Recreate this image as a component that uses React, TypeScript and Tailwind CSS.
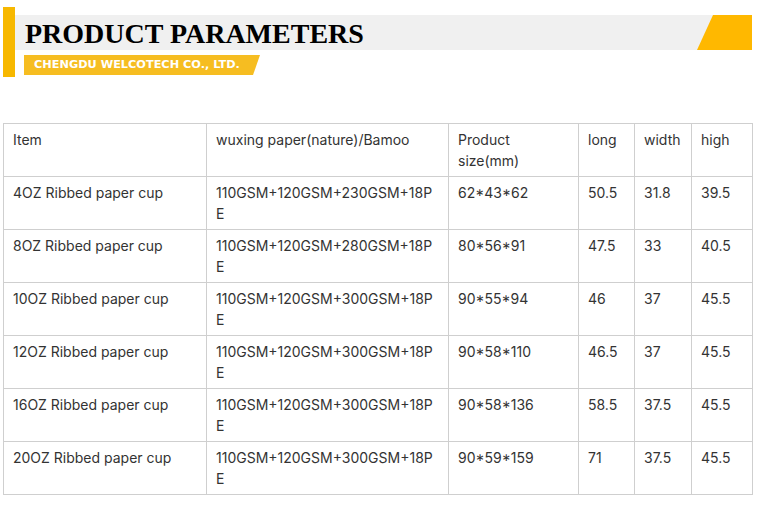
const headers = ["Item", "wuxing paper(nature)/Bamoo", "Product size(mm)", "long", "width", "high"];

const rows = [
  ["4OZ Ribbed paper cup", "110GSM+120GSM+230GSM+18PE", "62*43*62", "50.5", "31.8", "39.5"],
  ["8OZ Ribbed paper cup", "110GSM+120GSM+280GSM+18PE", "80*56*91", "47.5", "33", "40.5"],
  ["10OZ Ribbed paper cup", "110GSM+120GSM+300GSM+18PE", "90*55*94", "46", "37", "45.5"],
  ["12OZ Ribbed paper cup", "110GSM+120GSM+300GSM+18PE", "90*58*110", "46.5", "37", "45.5"],
  ["16OZ Ribbed paper cup", "110GSM+120GSM+300GSM+18PE", "90*58*136", "58.5", "37.5", "45.5"],
  ["20OZ Ribbed paper cup", "110GSM+120GSM+300GSM+18PE", "90*59*159", "71", "37.5", "45.5"],
];

function Cell({ children }: { children: React.ReactNode }) {
  return (
    <div className="border-r border-b border-[#cfcfcf] px-[9px] pt-[5px] text-[14px] leading-[21px] [overflow-wrap:anywhere] text-[#333]">
      {children}
    </div>
  );
}

export default function App() {
  return (
    <div className="min-h-screen w-[757px] bg-white font-['Inter',sans-serif]">
      {/* heading */}
      <div className="flex pl-[3px] pt-[7px]">
        <div className="h-[70px] w-[12px] bg-[#f7b800]" />
        <div className="w-[737px] pt-[8px]">
          <div className="flex h-[35px] bg-[#f0f0f0]">
            <h1 className="flex-1 pl-[10px] pt-[2px] font-['Liberation_Serif',serif] text-[28px] leading-[33px] font-bold text-black">
              PRODUCT PARAMETERS
            </h1>
            <div className="h-full w-[55px] bg-[#ffb800] [clip-path:polygon(16px_0,100%_0,100%_100%,0_100%)]" />
          </div>
          <div className="mt-[5px] ml-[9px] flex h-[20px] w-[236px] items-center bg-[#f6bd21] pl-[10px] [clip-path:polygon(0_0,100%_0,calc(100%-7px)_100%,0_100%)]">
            <span className="font-['DejaVu_Sans',sans-serif] text-[11.3px] leading-none font-bold text-white">
              CHENGDU WELCOTECH CO., LTD.
            </span>
          </div>
        </div>
      </div>

      {/* table */}
      <div className="mt-[46px] ml-[3px] grid w-[750px] auto-rows-[53px] grid-cols-[203px_242px_130px_56px_57px_61px] border-t border-l border-[#cfcfcf]">
        {headers.map((h) => (
          <Cell key={h}>{h}</Cell>
        ))}
        {rows.map((r) => r.map((c, i) => <Cell key={r[0] + i}>{c}</Cell>))}
      </div>
    </div>
  );
}
